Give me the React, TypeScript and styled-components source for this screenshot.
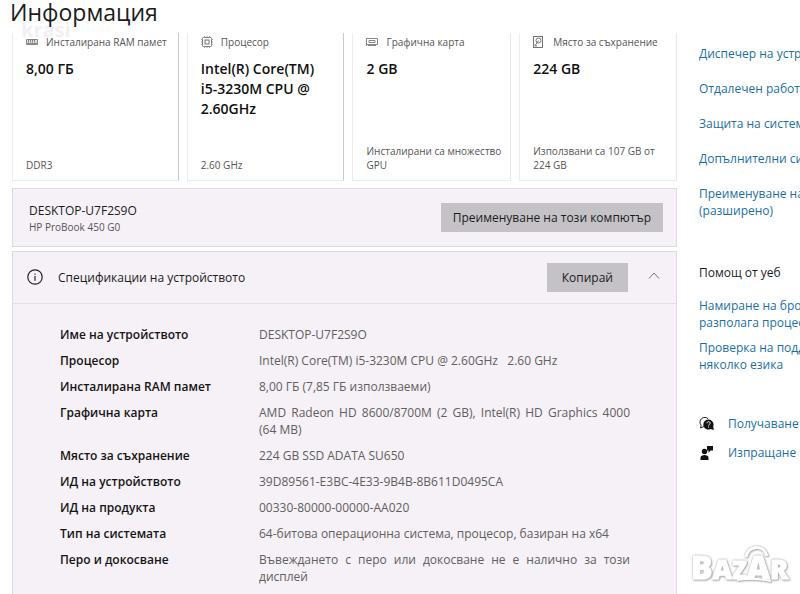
import React from "react";
import styled, { createGlobalStyle } from "styled-components";

const GlobalStyle = createGlobalStyle`
  *, *::before, *::after { box-sizing: border-box; }
  html, body, #root { height: 100%; }
  body {
    margin: 0;
    overflow: hidden;
    background: #fff;
    color: #1c1c1c;
    font: 12px/17px "Open Sans", "Noto Sans", sans-serif;
  }
  h1, h2, p, ul, dl, dd { margin: 0; padding: 0; }
  button { font: inherit; color: inherit; }
`;

const Page = styled.div`
  position: relative;
  height: 100vh;
  overflow: hidden;
  padding-left: 12px;
`;

const Header = styled.header`
  position: relative;
  height: 33px;
`;

const Title = styled.h1`
  position: relative;
  z-index: 1;
  margin-left: -2px;
  font-size: 23px;
  font-weight: 400;
  line-height: 24px;
`;

const OwnerMark = styled.span`
  position: absolute;
  left: 9px;
  top: 18px;
  font-size: 20px;
  font-weight: 700;
  line-height: 24px;
  color: #f0f0f6;
`;

const Columns = styled.div`
  display: grid;
  grid-template-columns: minmax(0, 1fr) 101px;
  column-gap: 22px;
`;

const Main = styled.main`
  display: flex;
  flex-direction: column;
`;

const Cards = styled.section`
  position: relative;
  display: grid;
  grid-template-columns: 167fr 158fr 159fr 158fr;
  gap: 8px;
  margin-bottom: 7px;
`;

const Card = styled.article<{ $strong?: boolean }>`
  display: flex;
  flex-direction: column;
  min-width: 0;
  height: 148px;
  padding: 1px 0 8px 13px;
  border: 1px solid #ececee;
  border-top: 0;
  border-right-color: ${(p) => (p.$strong ? "#c9c9cc" : "#e8e8ea")};
`;

const CardLabel = styled.h2`
  display: flex;
  align-items: center;
  gap: 8px;
  font-size: 10px;
  font-weight: 400;
  line-height: 16px;
  white-space: nowrap;
  color: #555;
`;

const CardIcon = styled.span`
  display: flex;
  flex: none;
  width: 12px;
`;

const CardValue = styled.p`
  margin-top: 9px;
  padding-right: 14px;
  font-size: 14px;
  font-weight: 600;
  line-height: 20px;
  color: #111;
`;

const CardNote = styled.p`
  margin-top: auto;
  padding-right: 5px;
  font-size: 10px;
  line-height: 14px;
  color: #555;
`;

const Panel = styled.section`
  border: 1px solid #dddae0;
  background: #f6f1f6;
`;

const DevicePanel = styled(Panel)`
  display: flex;
  align-items: center;
  justify-content: space-between;
  height: 59px;
  margin-bottom: 4px;
  padding: 0 13px 0 16px;
`;

const DeviceInfo = styled.div`
  padding-top: 3px;
`;

const DeviceName = styled.p`
  line-height: 16px;
`;

const DeviceModel = styled.p`
  font-size: 10px;
  line-height: 16px;
  color: #555;
`;

const ActionButton = styled.button`
  height: 29px;
  padding: 0 12px;
  border: 0;
  background: #c5c2c7;
  font-size: 12px;
  font-weight: 500;
`;

const CopyButton = styled(ActionButton)`
  padding: 0 15px;
  margin-left: auto;
`;

const ExpandButton = styled.button`
  display: flex;
  width: 16px;
  height: 20px;
  margin-left: 18px;
  padding: 0;
  border: 0;
  background: none;
  color: #777;
`;

const SpecHeader = styled.div`
  display: flex;
  align-items: center;
  height: 52px;
  padding: 0 14px;
  border-bottom: 1px solid #e4e0e5;
`;

const SpecTitle = styled.h2`
  margin-left: 14px;
  font-size: 12px;
  font-weight: 500;
`;

const SpecList = styled.dl`
  display: grid;
  grid-template-columns: 199px minmax(0, 1fr);
  row-gap: 9px;
  padding: 22px 46px 22px 47px;
`;

const SpecTerm = styled.dt`
  font-weight: 600;
  color: #151515;
`;

const SpecValue = styled.dd`
  color: #606060;
  text-align: justify;
  white-space: pre-wrap;
`;

const Side = styled.aside`
  padding-top: 12px;
  overflow: hidden;
  white-space: nowrap;
`;

const Links = styled.ul<{ $gap: number }>`
  display: flex;
  flex-direction: column;
  gap: ${(p) => p.$gap}px;
  list-style: none;
`;

const Link = styled.a`
  color: #1a6fa5;
  text-decoration: none;
`;

const SideTitle = styled.h2`
  margin: 45px 0 16px;
  font-size: 12px;
  font-weight: 400;
`;

const HelpLinks = styled(Links)`
  margin-top: 42px;
`;

const HelpItem = styled.li`
  display: grid;
  grid-template-columns: 16px auto;
  gap: 13px;
  align-items: center;
`;

const BrandMark = styled.svg`
  position: absolute;
  right: 6px;
  bottom: 6px;
  filter: drop-shadow(0 0 1px #aaa) drop-shadow(1px 1px 0 #c4c4c4);
`;

const RamIcon = () => (
  <svg width="12" height="12" viewBox="0 0 12 12" fill="none" stroke="#888">
    <path d="M.5 3.500h11v5H.5z" fill="#ddd" />
    <path d="M2.500 4v2.500M4.500 4v2.500M6.500 4v2.500M8.500 4v2.500M1 7.500h10" />
  </svg>
);

const CpuIcon = () => (
  <svg width="12" height="12" viewBox="0 0 12 12" fill="none" stroke="#777">
    <rect x="1.500" y="1.500" width="9" height="9" rx="1" />
    <rect x="4" y="4" width="4" height="4" />
    <path
      stroke="#aaa"
      d="M3.500 0v1.500M6 0v1.500M8.500 0v1.500M3.500 10.500V12M6 10.500V12M8.500 10.500V12M0 3.500h1.500M0 6h1.500M0 8.500h1.500M10.500 3.500H12M10.500 6H12M10.500 8.500H12"
    />
  </svg>
);

const GpuIcon = () => (
  <svg width="12" height="12" viewBox="0 0 12 12" fill="none" stroke="#888">
    <path d="M.5 2v8M.5 2.500h11v6H.5M3 4.500h6v2H3zM2 9.500h8" />
  </svg>
);

const DiskIcon = () => (
  <svg width="10" height="12" viewBox="0 0 10 12" fill="none" stroke="#777">
    <rect x=".5" y=".5" width="9" height="11" />
    <circle cx="5.500" cy="4.500" r="2.500" />
    <path d="M5.500 4.500 2.500 9M2 8.500v1.500h2" />
  </svg>
);

const InfoIcon = () => (
  <svg width="17" height="17" viewBox="0 0 17 17" fill="none" stroke="#222" strokeWidth="1.200">
    <circle cx="8" cy="8" r="7.200" />
    <path d="M8 7v4.700M8 4.400v1.300" />
  </svg>
);

const HelpIcon = () => (
  <svg width="16" height="16" viewBox="0 0 16 16" fill="none">
    <path d="M5 10.500 1.500 12l.7-2.700A4.500 4.500 0 1 1 9.300 3" stroke="#222" />
    <path d="M9.500 3.500a5 5 0 0 1 4.700 6.700l.6 3.800-3.300-1A5 5 0 1 1 9.500 3.500z" fill="#111" />
    <path d="M8 7.200c0-2 3.200-2 3.200 0 0 1.200-1.600 1.100-1.600 2.300M9.600 10.500v1" stroke="#fff" />
  </svg>
);

const FeedbackIcon = () => (
  <svg width="16" height="16" viewBox="0 0 16 16" fill="#111">
    <circle cx="5.500" cy="6.500" r="2.700" />
    <path d="M1.500 15v-2.500c0-3.500 8-3.500 8 0V15zM8 1h6v4.500h-2.500L9.500 8V5.500H8z" />
  </svg>
);

const cards = [
  { icon: <RamIcon />, label: "Инсталирана RAM памет", value: "8,00 ГБ", note: "DDR3" },
  { icon: <CpuIcon />, label: "Процесор", value: "Intel(R) Core(TM) i5-3230M CPU @ 2.60GHz", note: "2.60 GHz" },
  { icon: <GpuIcon />, label: "Графична карта", value: "2 GB", note: "Инсталирани са множество GPU" },
  { icon: <DiskIcon />, label: "Място за съхранение", value: "224 GB", note: "Използвани са 107 GB от 224 GB" },
];

const specs = [
  ["Име на устройството", "DESKTOP-U7F2S9O"],
  ["Процесор", "Intel(R) Core(TM) i5-3230M CPU @ 2.60GHz   2.60 GHz"],
  ["Инсталирана RAM памет", "8,00 ГБ (7,85 ГБ използваеми)"],
  ["Графична карта", "AMD Radeon HD 8600/8700M (2 GB), Intel(R) HD Graphics 4000 (64 MB)"],
  ["Място за съхранение", "224 GB SSD ADATA SU650"],
  ["ИД на устройството", "39D89561-E3BC-4E33-9B4B-8B611D0495CA"],
  ["ИД на продукта", "00330-80000-00000-AA020"],
  ["Тип на системата", "64-битова операционна система, процесор, базиран на x64"],
  ["Перо и докосване", "Въвеждането с перо или докосване не е налично за този дисплей"],
];

const related = [
  ["Диспечер на устр"],
  ["Отдалечен работе"],
  ["Защита на систем"],
  ["Допълнителни си"],
  ["Преименуване на", "(разширено)"],
];

const webHelp = [
  ["Намиране на бро", "разполага процес"],
  ["Проверка на подд", "няколко езика"],
];

const LinkItems = ({ items }: { items: string[][] }) => (
  <>
    {items.map((lines) => (
      <li key={lines[0]}>
        <Link href="#">
          {lines[0]}
          {lines[1] && <br />}
          {lines[1]}
        </Link>
      </li>
    ))}
  </>
);

export default function App() {
  return (
    <Page>
      <GlobalStyle />
      <Header>
        <Title>Информация</Title>
        <OwnerMark>krasi</OwnerMark>
      </Header>
      <Columns>
        <Main>
          <Cards>
            {cards.map((c, i) => (
              <Card key={c.label} $strong={i < 2}>
                <CardLabel>
                  <CardIcon>{c.icon}</CardIcon>
                  {c.label}
                </CardLabel>
                <CardValue>{c.value}</CardValue>
                <CardNote>{c.note}</CardNote>
              </Card>
            ))}
          </Cards>
          <DevicePanel>
            <DeviceInfo>
              <DeviceName>DESKTOP-U7F2S9O</DeviceName>
              <DeviceModel>HP ProBook 450 G0</DeviceModel>
            </DeviceInfo>
            <ActionButton>Преименуване на този компютър</ActionButton>
          </DevicePanel>
          <Panel>
            <SpecHeader>
              <InfoIcon />
              <SpecTitle>Спецификации на устройството</SpecTitle>
              <CopyButton>Копирай</CopyButton>
              <ExpandButton aria-label="Свиване">
                <svg width="16" height="16" viewBox="0 0 16 16" fill="none" stroke="currentColor">
                  <path d="m3 10.500 5-5.500 5 5.500" />
                </svg>
              </ExpandButton>
            </SpecHeader>
            <SpecList>
              {specs.map(([term, value]) => (
                <React.Fragment key={term}>
                  <SpecTerm>{term}</SpecTerm>
                  <SpecValue>{value}</SpecValue>
                </React.Fragment>
              ))}
            </SpecList>
          </Panel>
        </Main>
        <Side>
          <Links $gap={18}>
            <LinkItems items={related} />
          </Links>
          <SideTitle>Помощ от уеб</SideTitle>
          <Links $gap={8}>
            <LinkItems items={webHelp} />
          </Links>
          <HelpLinks $gap={12}>
            <HelpItem><HelpIcon /><Link href="#">Получаване</Link></HelpItem>
            <HelpItem><FeedbackIcon /><Link href="#">Изпращане н</Link></HelpItem>
          </HelpLinks>
        </Side>
      </Columns>
      <BrandMark width="104" height="46" viewBox="0 0 104 46">
        <path d="M56 15C58 3 74 2 77 14" fill="none" stroke="#fff" strokeWidth="3" />
        <path d="M47 38q16-3 34 1" fill="none" stroke="#fff" strokeWidth="2" />
        <text
          x="1"
          y="37"
          fill="#fff"
          stroke="#fff"
          fontFamily="Open Sans, sans-serif"
          fontWeight="800"
          fontSize="27"
        >
          <tspan fontSize="32">B</tspan>A<tspan fontSize="24">Z</tspan>
          <tspan fontSize="32">A</tspan>R
        </text>
      </BrandMark>
    </Page>
  );
}
